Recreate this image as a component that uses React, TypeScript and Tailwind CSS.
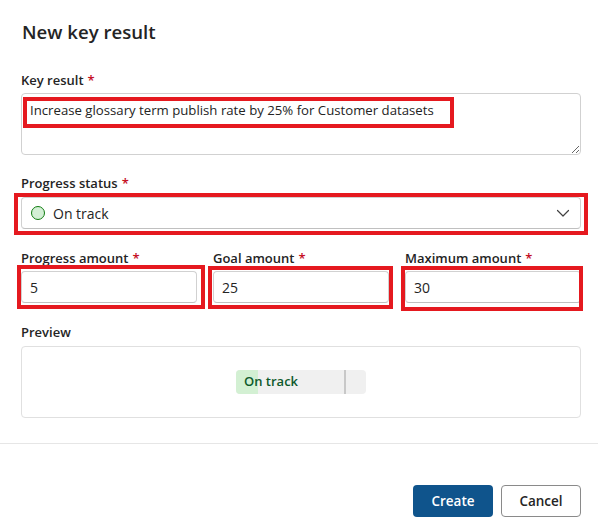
import React from "react";

const font = { fontFamily: '"Open Sans", "Noto Sans", sans-serif' };

function Label({ text, required = true }: { text: string; required?: boolean }) {
  return (
    <div className="h-[20px] leading-[23px] text-[13px] font-semibold text-[#242424]">
      {text}
      {required && <span className="ml-[4px] text-[#c50f1f]">*</span>}
    </div>
  );
}

function NumField({ label, value }: { label: string; value: string }) {
  return (
    <div className="flex flex-col w-[176px]">
      <Label text={label} />
      <div className="mt-[4px] h-[32px] border border-[#d1d1d1] border-b-[#c0c0c0] rounded-[4px] flex items-center pl-[8px] text-[14px] text-[#242424]">
        {value}
      </div>
    </div>
  );
}

export default function App() {
  return (
    <div className="relative w-[598px] h-[522px] bg-white overflow-hidden" style={font}>
      <div className="pl-[21px] pr-[17px] pt-[18px]">
        <div className="h-[28px] leading-[28px] text-[18.6px] font-semibold text-[#242424] pl-[1px]">
          New key result
        </div>
        <div className="mt-[23px]">
          <Label text="Key result" />
          <textarea
            readOnly
            value="Increase glossary term publish rate by 25% for Customer datasets"
            className="mt-[4px] block w-full h-[62px] border border-[#d1d1d1] rounded-[4px] px-[8px] pt-[6px] pb-[4px] text-[13.2px] leading-[20px] text-[#242424] resize-y outline-none"
            style={font}
          />
        </div>
        <div className="mt-[17px]">
          <Label text="Progress status" />
          <div className="mt-[5px] h-[32px] border border-[#d1d1d1] border-b-[#c0c0c0] rounded-[4px] flex items-center pl-[9px] pr-[10px]">
            <span className="block shrink-0 w-[14px] h-[14px] rounded-full bg-[#d3efd5] border border-[#107c10]" />
            <span className="ml-[8px] text-[14px] text-[#242424]">On track</span>
            <svg className="ml-auto" width="14" height="14" viewBox="0 0 14 14" fill="none">
              <path d="M1.5 4.5 L7 10 L12.5 4.5" stroke="#424242" strokeWidth="1.2" strokeLinecap="round" strokeLinejoin="round" />
            </svg>
          </div>
        </div>
        <div className="mt-[18px] flex gap-[16px]">
          <NumField label="Progress amount" value="5" />
          <NumField label="Goal amount" value="25" />
          <NumField label="Maximum amount" value="30" />
        </div>
        <div className="mt-[18px]">
          <Label text="Preview" required={false} />
          <div className="mt-[5px] h-[72px] border border-[#e0e0e0] rounded-[4px] flex items-center justify-center">
            <div className="relative w-[130px] h-[24px] rounded-[4px] bg-[#f0f0f0] overflow-hidden">
              <div className="absolute left-0 top-0 h-full w-[22px] bg-[#d3f0d3]" />
              <div className="absolute left-[108px] top-0 h-full w-[2px] bg-[#c8c8c8]" />
              <div className="relative pl-[8px] h-full flex items-center text-[13px] font-semibold text-[#0e5a2c]">
                On track
              </div>
            </div>
          </div>
        </div>
      </div>
      <div className="absolute left-0 right-0 top-[443px] border-t border-[#e6e6e6]" />
      <div className="absolute top-[485px] right-[17px] flex gap-[8px]">
        <button className="w-[80px] h-[32px] rounded-[4px] bg-[#0f548c] text-white text-[13.5px] font-semibold" style={font}>
          Create
        </button>
        <button className="w-[80px] h-[32px] rounded-[4px] bg-white border border-[#8a8a8a] text-[#242424] text-[13.5px] font-semibold" style={font}>
          Cancel
        </button>
      </div>

      {/* annotation overlays */}
      <div className="absolute left-[23px] top-[97px] w-[431px] h-[31px] border-4 border-[#e5191f] pointer-events-none" />
      <div className="absolute left-[14px] top-[193px] w-[574px] h-[42px] border-4 border-[#e5191f] pointer-events-none" />
      <div className="absolute left-[17px] top-[265px] w-[188px] h-[44px] border-4 border-[#e5191f] pointer-events-none" />
      <div className="absolute left-[208px] top-[266px] w-[185px] h-[43px] border-4 border-[#e5191f] pointer-events-none" />
      <div className="absolute left-[401px] top-[266px] w-[182px] h-[45px] border-4 border-[#e5191f] pointer-events-none" />
    </div>
  );
}
